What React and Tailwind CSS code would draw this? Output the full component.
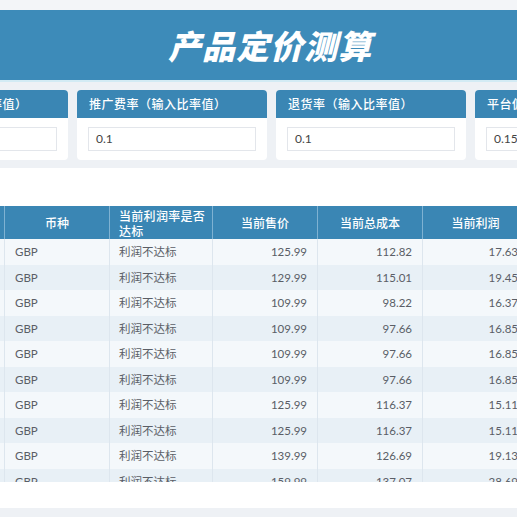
const cjk = { fontFamily: '"Noto Sans CJK SC", "Noto Sans", sans-serif' }
const num = { fontFamily: 'Lato, "Noto Sans", sans-serif' }

const cards = [
    { label: "目标利润（输入比率值）", value: "0.3" },
    { label: "推广费率（输入比率值）", value: "0.1" },
    { label: "退货率（输入比率值）", value: "0.1" },
    { label: "平台佣金率（输入比率值）", value: "0.15" },
]

const rows = [
    ["125.99", "112.82", "17.63"],
    ["129.99", "115.01", "19.45"],
    ["109.99", "98.22", "16.37"],
    ["109.99", "97.66", "16.85"],
    ["109.99", "97.66", "16.85"],
    ["109.99", "97.66", "16.85"],
    ["125.99", "116.37", "15.11"],
    ["125.99", "116.37", "15.11"],
    ["139.99", "126.69", "19.13"],
    ["159.99", "137.07", "28.69"],
]

const Card = ({ label, value }) => (
    <div className="w-[190px] h-[70px] shrink-0 bg-white rounded-[4px] overflow-hidden">
        <div className="h-[28px] bg-[#3a86b4] flex items-center pl-[12px] text-white text-[12px] font-medium tracking-[0.5px]">
            {label}
        </div>
        <div className="px-[11px] pt-[9px]">
            <div className="h-[24px] border border-[#e3e6eb] flex items-center pl-[7px] text-[12px] text-[#444]" style={num}>
                {value}
            </div>
        </div>
    </div>
)

const App = () => {
    return (
        <div className="w-[517px] h-[517px] overflow-hidden bg-[#eef1f5]" style={cjk}>
            <div className="h-[10px] bg-[#f3f5f8]" />
            <header className="h-[70px] bg-[#3d8bb9] flex items-center justify-center pl-[23px]">
                <h1 className="text-[33px] font-black italic text-white tracking-[1px] leading-none">产品定价测算</h1>
            </header>
            <div className="h-[2px] bg-[#d3ebf4]" />
            <section className="flex gap-[9px] ml-[-122px] pt-[8px]">
                {cards.map(c => <Card key={c.label} {...c} />)}
            </section>
            <main className="mt-[8px] h-[340px] bg-white pt-[38px]">
                <div className="h-[276px] overflow-hidden ml-[-100px] w-[628px] text-[11.5px]">
                    <div className="grid grid-cols-[105px_105px_103px_105px_105px_105px] h-[33px] bg-[#3a86b4] text-white text-[12px] font-medium">
                        <div className="border-r border-[#7fb2d2]" />
                        <div className="border-r border-[#7fb2d2] flex items-center justify-center">币种</div>
                        <div className="border-r border-[#7fb2d2] flex items-center pl-[9px] pr-[4px] leading-[15px] tracking-[0.3px]">当前利润率是否达标</div>
                        <div className="border-r border-[#7fb2d2] flex items-center justify-center">当前售价</div>
                        <div className="border-r border-[#7fb2d2] flex items-center justify-center">当前总成本</div>
                        <div className="flex items-center justify-center">当前利润</div>
                    </div>
                    {rows.map((r, i) => (
                        <div key={i} className={`grid grid-cols-[105px_105px_103px_105px_105px_105px] h-[25.5px] text-[#5a5e66] ${i % 2 === 0 ? "bg-[#f4f8fb]" : "bg-[#e8f0f6]"}`}>
                            <div className="border-r border-[#dde6ee]" />
                            <div className="border-r border-[#dde6ee] flex items-center pl-[10px]" style={num}>GBP</div>
                            <div className="border-r border-[#dde6ee] flex items-center pl-[9px]">利润不达标</div>
                            {r.map((v, j) => (
                                <div key={j} className={`flex items-center justify-end pr-[10px] ${j < 2 ? "border-r border-[#dde6ee]" : ""}`} style={num}>{v}</div>
                            ))}
                        </div>
                    ))}
                </div>
            </main>
        </div>
    )
}
export default App
